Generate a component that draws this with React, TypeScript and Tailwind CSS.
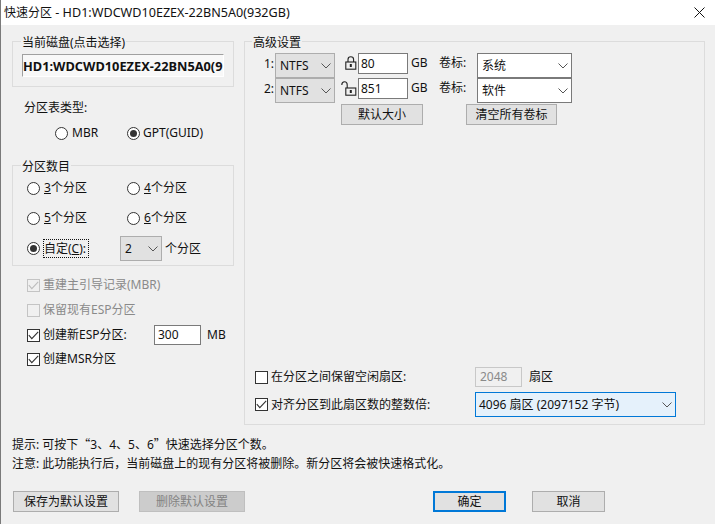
import React from "react";

function Chevron() {
  return (
    <svg width="10" height="6" viewBox="0 0 10 6" fill="none" className="shrink-0">
      <path d="M0.5 0.5 L5 5 L9.5 0.5" stroke="#555" strokeWidth="1" />
    </svg>
  );
}

function Radio({ checked = false }: { checked?: boolean }) {
  return (
    <span className="w-[13px] h-[13px] rounded-full border border-[#333] bg-white flex items-center justify-center shrink-0">
      {checked && <span className="w-[7px] h-[7px] rounded-full bg-[#333]" />}
    </span>
  );
}

function Check({ checked = false, disabled = false }: { checked?: boolean; disabled?: boolean }) {
  return (
    <span
      className={`w-[13px] h-[13px] border flex items-center justify-center shrink-0 ${
        disabled ? "border-[#c4c4c4] bg-[#f0f0f0]" : "border-[#333] bg-white"
      }`}
    >
      {checked && (
        <svg width="11" height="9" viewBox="0 0 11 9" fill="none">
          <path d="M0.8 4.2 L3.8 7.6 L10.2 0.8" stroke={disabled ? "#bdbdbd" : "#333"} strokeWidth="1.1" />
        </svg>
      )}
    </span>
  );
}

function Drop({ label, className }: { label: string; className: string }) {
  return (
    <div className={`flex items-center justify-between border pl-[4px] pr-[3px] ${className}`}>
      <span>{label}</span>
      <Chevron />
    </div>
  );
}

function Btn({ label, className }: { label: string; className: string }) {
  return (
    <div className={`h-[21px] flex items-center justify-center border border-[#adadad] bg-[#e1e1e1] ${className}`}>
      {label}
    </div>
  );
}

function LockClosed() {
  return (
    <svg width="12" height="14" viewBox="0 0 12 14" fill="none" className="shrink-0">
      <path d="M3 6 V3.5 C3 1.8 4.2 0.8 5.8 0.8 C7.4 0.8 8.6 1.8 8.6 3.5 V6" stroke="#222" strokeWidth="1.1" />
      <rect x="0.8" y="6" width="10" height="7.2" stroke="#222" strokeWidth="1.1" fill="#f0f0f0" />
      <rect x="4.8" y="8" width="2" height="3" fill="#222" />
    </svg>
  );
}

function LockOpen() {
  return (
    <svg width="16" height="15" viewBox="0 0 16 15" fill="none" className="shrink-0">
      <path d="M0.8 4 C0.8 1.8 2 0.8 3.5 0.8 C5 0.8 6.2 1.8 6.2 3.8 V7" stroke="#222" strokeWidth="1.1" />
      <rect x="4.8" y="7" width="10" height="7.2" stroke="#222" strokeWidth="1.1" fill="#f0f0f0" />
      <rect x="8.8" y="9" width="2" height="3" fill="#222" />
    </svg>
  );
}

function PartRow({ n, size, label, lock, mt }: { n: string; size: string; label: string; lock: React.ReactNode; mt: string }) {
  return (
    <div className={`flex items-start ${mt}`}>
      <span className="w-[20px] text-right mt-[3px]">{n}:</span>
      <Drop label="NTFS" className="w-[60px] h-[25px] border-[#adadad] bg-[#e1e1e1] ml-[1px]" />
      <span className="w-[23px] flex justify-end mt-[3px] pr-[1px]">{lock}</span>
      <div className="w-[50px] h-[21px] border border-[#7a7a7a] bg-white flex items-center pl-[2px]">{size}</div>
      <span className="ml-[3px] mt-[2px] w-[28px]">GB</span>
      <span className="mt-[2px] w-[38px]">卷标:</span>
      <Drop label={label} className="w-[95px] h-[25px] border-[#7a7a7a] bg-white" />
    </div>
  );
}

export default function App() {
  return (
    <div className="[font-family:'Noto_Sans','Noto_Sans_CJK_SC',sans-serif] w-[715px] h-[524px] bg-[#f0f0f0] border-l border-[#7a7a7a] text-[12px] leading-[16px] text-[#111] flex flex-col overflow-hidden">
      <div className="h-[25px] bg-white flex items-center justify-between pl-[3px] pr-[10px] shrink-0">
        <span className="text-[12.6px] whitespace-nowrap"><span className="text-[12px]">快速分区</span> - HD1:WDCWD10EZEX-22BN5A0(932GB)</span>
        <svg width="11" height="11" viewBox="0 0 11 11" fill="none">
          <path d="M0.5 0.5 L10.5 10.5 M10.5 0.5 L0.5 10.5" stroke="#111" strokeWidth="1" />
        </svg>
      </div>

      <div className="flex items-start pl-[11px] pt-[8px] gap-[10px] shrink-0">
        <div className="w-[222px] flex flex-col">
          <fieldset className="h-[54px] border border-[#dcdcdc] px-[9px]">
            <legend className="ml-[-1px] px-[1px] h-[16px] pt-[2px]">当前磁盘(点击选择)</legend>
            <div className="h-[23px] mt-[5px] bg-[#f8f8f8] border border-t-[#a0a0a0] border-l-[#a0a0a0] border-r-white border-b-white flex items-center font-bold text-[12.8px] whitespace-nowrap w-[202px]">
              HD1:WDCWD10EZEX-22BN5A0(9
            </div>
          </fieldset>

          <div className="mt-[13px] ml-[12px]">分区表类型:</div>
          <div className="flex items-center mt-[9px] ml-[43px]">
            <Radio />
            <span className="ml-[4px] w-[55px]">MBR</span>
            <Radio checked />
            <span className="ml-[3px]">GPT(GUID)</span>
          </div>

          <fieldset className="h-[109px] mt-[16px] border border-[#dcdcdc] pl-[14px]">
            <legend className="ml-[-6px] px-[1px] h-[16px] pt-[2px]">分区数目</legend>
            <div className="flex items-center mt-[7px]">
              <Radio />
              <span className="ml-[4px] w-[83px]"><u>3</u>个分区</span>
              <Radio />
              <span className="ml-[4px]"><u>4</u>个分区</span>
            </div>
            <div className="flex items-center mt-[14px]">
              <Radio />
              <span className="ml-[4px] w-[83px]"><u>5</u>个分区</span>
              <Radio />
              <span className="ml-[4px]"><u>6</u>个分区</span>
            </div>
            <div className="flex items-center mt-[10px]">
              <Radio checked />
              <span className="ml-[3px] border border-dotted border-[#111] h-[19px] w-[46px] flex items-center whitespace-nowrap">自定(<u>C</u>):</span>
              <Drop label="2" className="w-[42px] h-[25px] border-[#adadad] bg-[#e1e1e1] ml-[31px]" />
              <span className="ml-[3px]">个分区</span>
            </div>
          </fieldset>

          <div className="flex flex-col ml-[15px] mt-[11px]">
            <div className="flex items-center h-[16px] text-[#8a8a8a]">
              <Check checked disabled />
              <span className="ml-[3px]">重建主引导记录(MBR)</span>
            </div>
            <div className="flex items-center h-[16px] mt-[9px] text-[#8a8a8a]">
              <Check disabled />
              <span className="ml-[3px]">保留现有ESP分区</span>
            </div>
            <div className="flex items-center h-[20px] mt-[7px]">
              <Check checked />
              <span className="ml-[3px] w-[111px]">创建新ESP分区:</span>
              <div className="w-[47px] h-[20px] border border-[#7a7a7a] bg-white flex items-center pl-[3px]">300</div>
              <span className="ml-[6px]">MB</span>
            </div>
            <div className="flex items-center h-[16px] mt-[6px]">
              <Check checked />
              <span className="ml-[3px]">创建MSR分区</span>
            </div>
          </div>
        </div>

        <fieldset className="w-[461px] h-[392px] border border-[#dcdcdc] pl-[9px] flex flex-col">
          <legend className="ml-[-2px] px-[1px] h-[16px] pt-[2px]">高级设置</legend>
          <PartRow n="1" size="80" label="系统" lock={<LockClosed />} mt="mt-[4px]" />
          <PartRow n="2" size="851" label="软件" lock={<LockOpen />} mt="mt-0" />
          <div className="flex mt-[1px] ml-[87px]">
            <Btn label="默认大小" className="w-[82px]" />
            <Btn label="清空所有卷标" className="w-[91px] ml-[43px]" />
          </div>
          <div className="flex items-center mt-[242px] ml-[1px]">
            <Check />
            <span className="ml-[3px] w-[204px]">在分区之间保留空闲扇区:</span>
            <div className="w-[47px] h-[20px] border border-[#c8c8c8] bg-[#f0f0f0] text-[#8a8a8a] flex items-center pl-[4px]">2048</div>
            <span className="ml-[7px]">扇区</span>
          </div>
          <div className="flex items-center mt-[5px] ml-[1px]">
            <Check checked />
            <span className="ml-[3px] w-[204px]">对齐分区到此扇区数的整数倍:</span>
            <div className="w-[201px] h-[25px] border border-[#0078d7] bg-[#e5f1fb] flex items-center justify-between pl-[3px] pr-[3px]">
              <span>4096 扇区 (2097152 字节)</span>
              <Chevron />
            </div>
          </div>
        </fieldset>
      </div>

      <div className="ml-[11px] mt-[11px] flex flex-col gap-[3px]">
        <div>提示: 可按下<span className="[font-family:'Noto_Sans_CJK_SC',sans-serif]">“</span>3、4、5、6<span className="[font-family:'Noto_Sans_CJK_SC',sans-serif]">”</span>快速选择分区个数。</div>
        <div>注意: 此功能执行后，当前磁盘上的现有分区将被删除。新分区将会被快速格式化。</div>
      </div>

      <div className="flex ml-[12px] mt-[19px]">
        <Btn label="保存为默认设置" className="w-[106px]" />
        <div className="w-[106px] h-[21px] ml-[20px] flex items-center justify-center border border-[#bfbfbf] bg-[#cccccc] text-[#838383]">删除默认设置</div>
        <Btn label="确定" className="w-[73px] ml-[188px] !border-2 !border-[#0078d7]" />
        <Btn label="取消" className="w-[73px] ml-[26px]" />
      </div>
    </div>
  );
}
